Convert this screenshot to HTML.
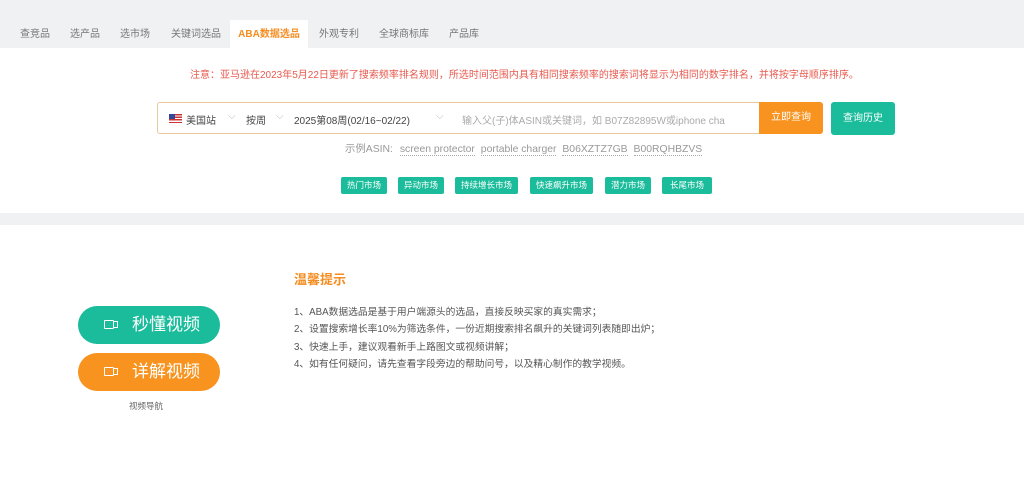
<!DOCTYPE html><html><head><meta charset="utf-8"><style>
*{margin:0;padding:0;box-sizing:border-box}
body{width:1024px;height:502px;background:#f0f1f3;font-family:"Liberation Sans","Noto Sans CJK SC",sans-serif;position:relative;overflow:hidden;color:#666}
.a{position:absolute;white-space:nowrap}
.tab{position:absolute;top:20px;height:28px;line-height:30px;font-size:10px;color:#777}
.tag{position:absolute;top:177px;height:17px;line-height:17px;background:#1bbc9b;color:#fff;font-size:8.5px;padding:0 6px;border-radius:2px}
.li{position:absolute;left:294px;font-size:9.75px;color:#555}
</style></head><body>
<div class="tab" style="left:20px">查竞品</div>
<div class="tab" style="left:70px">选产品</div>
<div class="tab" style="left:120px">选市场</div>
<div class="tab" style="left:171px">关键词选品</div>
<div class="tab" style="left:230px;width:78px;background:#fff;text-align:center;color:#f58c1f;font-weight:bold">ABA数据选品</div>
<div class="tab" style="left:319px">外观专利</div>
<div class="tab" style="left:379px">全球商标库</div>
<div class="tab" style="left:449px">产品库</div>
<div class="a" style="left:0;top:48px;width:1024px;height:165px;background:#fff"></div>
<div class="a" style="left:0;top:225px;width:1024px;height:277px;background:#fff"></div>
<div class="a" style="left:190px;top:66px;font-size:10px;color:#e85a4f">注意：亚马逊在2023年5月22日更新了搜索频率排名规则，所选时间范围内具有相同搜索频率的搜索词将显示为相同的数字排名，并将按字母顺序排序。</div>
<div class="a" style="left:157px;top:102px;width:603px;height:32px;border:1px solid #e8c89a;border-right:none;border-radius:3px 0 0 3px;background:#fff;font-size:10px;color:#444">
<div class="a" style="left:11px;top:11px;width:13px;height:9px;background:repeating-linear-gradient(#c33 0 1.3px,#fff 1.3px 2.6px)"><div style="width:6px;height:5px;background:#33489a"></div></div>
<div class="a" style="left:28px;top:9px">美国站</div><div class="a" style="left:70px;top:8px;color:#bbb">⌵</div>
<div class="a" style="left:88px;top:9px">按周</div><div class="a" style="left:118px;top:8px;color:#bbb">⌵</div>
<div class="a" style="left:136px;top:9px">2025第08周(02/16~02/22)</div><div class="a" style="left:278px;top:8px;color:#bbb">⌵</div>
<div class="a" style="left:304px;top:9px;color:#aaa">输入父(子)体ASIN或关键词，如 B07Z82895W或iphone cha</div></div>
<div class="a" style="left:759px;top:102px;width:64px;height:32px;background:#f7931e;border-radius:0 3px 3px 0;color:#fff;font-size:10px;line-height:32px;text-align:center">立即查询</div>
<div class="a" style="left:831px;top:102px;width:64px;height:33px;background:#1bbc9b;border-radius:3px;color:#fff;font-size:10px;line-height:33px;text-align:center">查询历史</div>
<div class="a" style="left:345px;top:140px;font-size:10.4px;color:#999">示例ASIN: <span style="border-bottom:1px dotted #aaa;margin-left:4px">screen protector</span> <span style="border-bottom:1px dotted #aaa;margin-left:3px">portable charger</span> <span style="border-bottom:1px dotted #aaa;margin-left:3px">B06XZTZ7GB</span> <span style="border-bottom:1px dotted #aaa;margin-left:3px">B00RQHBZVS</span></div>
<div class="tag" style="left:341px">热门市场</div>
<div class="tag" style="left:398px">异动市场</div>
<div class="tag" style="left:455px">持续增长市场</div>
<div class="tag" style="left:530px">快速飙升市场</div>
<div class="tag" style="left:605px">潜力市场</div>
<div class="tag" style="left:662px;padding:0 8px">长尾市场</div>
<div class="a" style="left:78px;top:306px;width:142px;height:38px;border-radius:19px;background:#1bbc9b;color:#fff;font-size:17px;line-height:38px"><span style="position:absolute;left:26px;top:14px;width:10px;height:9px;border:1.5px solid #fff;border-radius:1px"></span><span style="position:absolute;left:36px;top:15px;width:4px;height:7px;border:1.5px solid #fff;border-left:none"></span><span style="position:absolute;left:54px">秒懂视频</span></div>
<div class="a" style="left:78px;top:353px;width:142px;height:38px;border-radius:19px;background:#f7931e;color:#fff;font-size:17px;line-height:38px"><span style="position:absolute;left:26px;top:14px;width:10px;height:9px;border:1.5px solid #fff;border-radius:1px"></span><span style="position:absolute;left:36px;top:15px;width:4px;height:7px;border:1.5px solid #fff;border-left:none"></span><span style="position:absolute;left:54px">详解视频</span></div>
<div class="a" style="left:129px;top:400px;font-size:8.5px;color:#666">视频导航</div>
<div class="a" style="left:294px;top:269px;font-size:13px;color:#f58c1f;font-weight:bold">温馨提示</div>
<div class="li" style="top:304px">1、ABA数据选品是基于用户端源头的选品，直接反映买家的真实需求；</div>
<div class="li" style="top:321px">2、设置搜索增长率10%为筛选条件，一份近期搜索排名飙升的关键词列表随即出炉；</div>
<div class="li" style="top:339px">3、快速上手，建议观看新手上路图文或视频讲解；</div>
<div class="li" style="top:356px">4、如有任何疑问，请先查看字段旁边的帮助问号，以及精心制作的教学视频。</div>
</body></html>
